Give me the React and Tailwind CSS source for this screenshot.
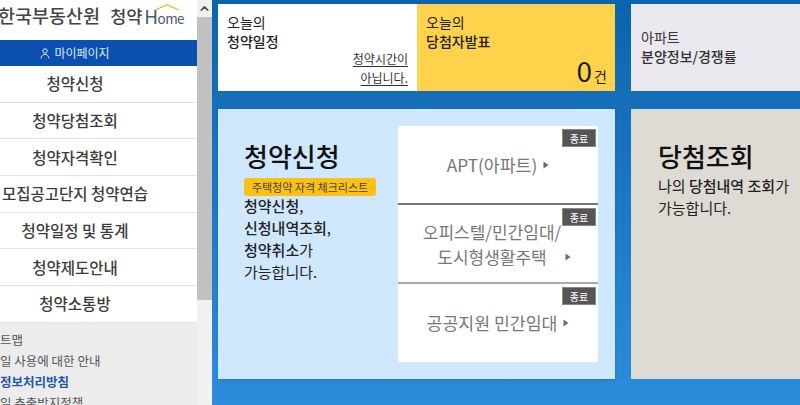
import React from "react";
import { ChevronUp } from "lucide-react";

const font = { fontFamily: '"Noto Sans CJK KR", "Noto Sans", sans-serif' };

const menus = [
  "청약신청",
  "청약당첨조회",
  "청약자격확인",
  "모집공고단지 청약연습",
  "청약일정 및 통계",
  "청약제도안내",
  "청약소통방",
];

function Arrow() {
  return (
    <svg width="6" height="8" viewBox="0 0 6 8" className="shrink-0">
      <path d="M0.5 0.5L5.5 4L0.5 7.5Z" fill="#6b6b6b" />
    </svg>
  );
}

function Closed() {
  return (
    <span className="absolute right-[2px] top-[3px] flex h-[18px] w-[34px] items-center justify-center border border-[#888] bg-[#555] text-[10px] text-white">
      종료
    </span>
  );
}

function Sidebar() {
  return (
    <aside className="flex h-full w-[197px] shrink-0 flex-col overflow-hidden bg-[#ececec]">
      <div className="ml-[-48px] w-[246px]">
        {/* Logo */}
        <div className="flex h-[40px] items-center gap-[10px] bg-white pb-[8px] pl-[46px]">
          <span className="whitespace-nowrap text-[18.5px] font-medium text-[#444]">
            한국부동산원
          </span>
          <span className="flex items-center whitespace-nowrap text-[17.5px] font-medium text-[#444]">
            청약
            <span className="relative ml-[2px] flex items-baseline font-normal leading-none tracking-[-0.6px] text-[#46586b]">
              <span className="text-[19px]">H</span>
              <span className="text-[13.5px]">ome</span>
              <svg width="26" height="7" viewBox="0 0 26 7" className="absolute left-[10px] top-[-2px]">
                <path d="M1 6L13 1L25 6" fill="none" stroke="#f0b020" strokeWidth="1.2" />
              </svg>
            </span>
          </span>
        </div>

        <div className="flex h-[26px] items-center justify-center gap-[4px] bg-[#0b50b0] text-[12px] text-[#dbe7f7]">
          <svg width="10" height="11" viewBox="0 0 10 11" fill="none" stroke="#e6eefa" strokeWidth="1">
            <circle cx="5" cy="3" r="2.2" />
            <path d="M1 10.5C1.4 7.8 3 6.4 5 6.4S8.6 7.8 9 10.5" />
          </svg>
          마이페이지
        </div>

        {/* Menu */}
        <nav className="bg-white">
          {menus.map((m) => (
            <div
              key={m}
              className="flex h-[36.7px] items-center justify-center whitespace-nowrap border-b border-[#e3e3e3] text-[15.5px] font-medium text-[#3c3c3c]"
            >
              {m}
            </div>
          ))}
        </nav>

        {/* Footer links */}
        <ul className="flex flex-col gap-[3px] pl-[25px] pt-[8px] text-[12.5px] leading-[18px] text-[#555]">
          <li>사이트맵</li>
          <li className="whitespace-nowrap">이메일 사용에 대한 안내</li>
          <li className="font-bold text-[#1f56a8]">개인정보처리방침</li>
          <li>이메일 추출방지정책</li>
        </ul>
      </div>
    </aside>
  );
}

function Scrollbar() {
  return (
    <div className="flex h-full w-[15px] shrink-0 flex-col bg-[#f1f1f1]">
      <div className="flex h-[17px] items-center justify-center">
        <ChevronUp size={13} strokeWidth={3} color="#505050" />
      </div>
      <div className="h-[283px] bg-[#c1c1c1]" />
    </div>
  );
}

export default function App() {
  return (
    <div style={font} className="flex h-[405px] w-[800px] overflow-hidden">
      <Sidebar />
      <Scrollbar />

      <main className="min-w-0 flex-1 overflow-hidden bg-gradient-to-b from-[#0a64ad] to-[#2d8ddb] pl-[6px] pt-[4px]">
        {/* Top row */}
        <div className="flex gap-[16px]">
          <div className="flex h-[87px] w-[397px] shrink-0">
            <div className="relative w-[199px] bg-white pl-[9px] pt-[9px] text-[14px] leading-[19px] text-[#222]">
              <p>오늘의</p>
              <p className="font-medium">청약일정</p>
              <p className="absolute right-[9px] top-[45px] text-right text-[12px] leading-[19px] text-[#333] underline underline-offset-2">
                청약시간이
                <br />
                아닙니다.
              </p>
            </div>
            <div className="relative flex-1 bg-[#ffd24c] pl-[9px] pt-[9px] text-[14px] leading-[19px] text-[#222]">
              <p>오늘의</p>
              <p className="font-medium">당첨자발표</p>
              <p className="absolute bottom-[7px] right-[8px] flex items-baseline gap-[2px] leading-none text-[#222]">
                <span className="text-[28px]">0</span>
                <span className="text-[14px]">건</span>
              </p>
            </div>
          </div>
          <div className="h-[87px] w-[200px] shrink-0 bg-[#ece8f0] pl-[10px] pt-[24px] text-[14px] leading-[19px] text-[#333]">
            <p>아파트</p>
            <p className="font-medium">분양정보/경쟁률</p>
          </div>
        </div>

        {/* Big cards */}
        <div className="mt-[18px] flex gap-[16px]">
          <div className="flex h-[270px] w-[397px] shrink-0 items-start justify-between bg-[#cfe8fd] pl-[26px] pr-[17px] pt-[17px] shadow-sm">
            <div className="pt-[14px]">
              <h2 className="text-[26px] font-medium leading-[32px] text-[#111]">청약신청</h2>
              <span className="mt-[6px] block w-[132px] whitespace-nowrap rounded-[3px] bg-[#fdc113] py-[1px] text-center text-[11px] leading-[16px] text-[#444]">
                주택청약 자격 체크리스트
              </span>
              <div className="mt-[-1px] text-[15px] leading-[22px] text-[#222]">
                <p><b className="font-medium">청약신청</b>,</p>
                <p><b className="font-medium">신청내역조회</b>,</p>
                <p><b className="font-medium">청약취소</b>가</p>
                <p>가능합니다.</p>
              </div>
            </div>
            <div className="flex h-[236px] w-[200px] shrink-0 flex-col bg-white text-[#777]">
              <div className="relative flex h-[79px] items-center justify-center gap-[6px] border-b-2 border-[#777] text-[17.25px]">
                <Closed />
                APT(아파트) <Arrow />
              </div>
              <div className="relative flex h-[79px] items-center justify-center border-b-2 border-[#aaa] pr-[12px] pt-[1px] text-center text-[17px] leading-[25px]">
                <Closed />
                <p>
                  오피스텔/민간임대/
                  <br />
                  <span className="ml-[24px] inline-flex items-center gap-[18px]">
                    도시형생활주택 <Arrow />
                  </span>
                </p>
              </div>
              <div className="relative flex flex-1 items-center justify-center gap-[6px] text-[17.25px]">
                <Closed />
                공공지원 민간임대 <Arrow />
              </div>
            </div>
          </div>

          <div className="h-[270px] w-[200px] shrink-0 bg-[#dedbd4] pl-[27px] pt-[31px] text-[#222]">
            <h2 className="text-[26px] font-medium leading-[32px] text-[#111]">당첨조회</h2>
            <p className="mt-[3px] whitespace-nowrap text-[15px] leading-[22px]">
              나의 <b className="font-medium">당첨내역 조회</b>가
              <br />
              가능합니다.
            </p>
          </div>
        </div>
      </main>
    </div>
  );
}
